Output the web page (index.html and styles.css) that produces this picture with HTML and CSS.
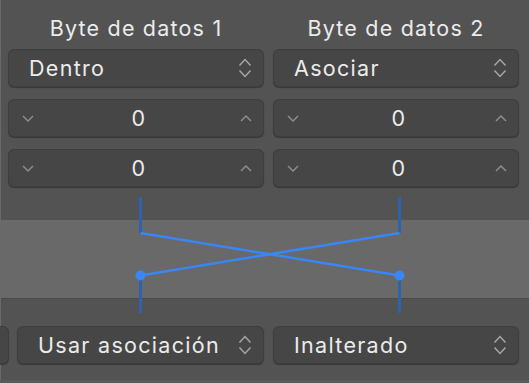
FILE: index.html
```html
<!DOCTYPE html>
<html>
<head>
<meta charset="utf-8">
<link rel="stylesheet" href="styles.css">
</head>
<body>
<div class="frame">
  <div class="columns">
    <div class="col">
      <div class="head">Byte de datos 1</div>
      <div class="ctl popup"><span>Dentro</span>
        <svg class="updown" width="14" height="22" viewBox="0 0 14 22"><path d="M1.5 8.5 L7 2.5 L12.5 8.5 M1.5 13.5 L7 19.5 L12.5 13.5" fill="none" stroke="#a6a6a6" stroke-width="1.5"/></svg>
      </div>
      <div class="ctl stepper">
        <svg class="dn" width="12" height="7" viewBox="0 0 12 7"><path d="M1 1 L6 6 L11 1" fill="none" stroke="#8c8c8c" stroke-width="1.5"/></svg>
        <span class="num">0</span>
        <svg class="up" width="12" height="7" viewBox="0 0 12 7"><path d="M1 6 L6 1 L11 6" fill="none" stroke="#8c8c8c" stroke-width="1.5"/></svg>
      </div>
      <div class="ctl stepper">
        <svg class="dn" width="12" height="7" viewBox="0 0 12 7"><path d="M1 1 L6 6 L11 1" fill="none" stroke="#8c8c8c" stroke-width="1.5"/></svg>
        <span class="num">0</span>
        <svg class="up" width="12" height="7" viewBox="0 0 12 7"><path d="M1 6 L6 1 L11 6" fill="none" stroke="#8c8c8c" stroke-width="1.5"/></svg>
      </div>
    </div>
    <div class="col">
      <div class="head">Byte de datos 2</div>
      <div class="ctl popup"><span>Asociar</span>
        <svg class="updown" width="14" height="22" viewBox="0 0 14 22"><path d="M1.5 8.5 L7 2.5 L12.5 8.5 M1.5 13.5 L7 19.5 L12.5 13.5" fill="none" stroke="#a6a6a6" stroke-width="1.5"/></svg>
      </div>
      <div class="ctl stepper">
        <svg class="dn" width="12" height="7" viewBox="0 0 12 7"><path d="M1 1 L6 6 L11 1" fill="none" stroke="#8c8c8c" stroke-width="1.5"/></svg>
        <span class="num">0</span>
        <svg class="up" width="12" height="7" viewBox="0 0 12 7"><path d="M1 6 L6 1 L11 6" fill="none" stroke="#8c8c8c" stroke-width="1.5"/></svg>
      </div>
      <div class="ctl stepper">
        <svg class="dn" width="12" height="7" viewBox="0 0 12 7"><path d="M1 1 L6 6 L11 1" fill="none" stroke="#8c8c8c" stroke-width="1.5"/></svg>
        <span class="num">0</span>
        <svg class="up" width="12" height="7" viewBox="0 0 12 7"><path d="M1 6 L6 1 L11 6" fill="none" stroke="#8c8c8c" stroke-width="1.5"/></svg>
      </div>
    </div>
  </div>

  <div class="diagram">
    <div class="band"></div>
    <svg class="wires" width="529" height="139" viewBox="0 0 529 139">
      <g stroke="#2d62b0" stroke-width="3" fill="none">
        <line x1="140.5" y1="10" x2="140.5" y2="46"/>
        <line x1="399.5" y1="10" x2="399.5" y2="46"/>
        <line x1="140.5" y1="89" x2="140.5" y2="126"/>
        <line x1="399.5" y1="89" x2="399.5" y2="126"/>
      </g>
      <g stroke="#3a86f5" stroke-width="2.5" fill="none">
        <line x1="140.5" y1="46" x2="399.5" y2="88.5"/>
        <line x1="399.5" y1="46" x2="140.5" y2="88.5"/>
      </g>
      <circle cx="140.5" cy="88.5" r="5" fill="#3a86f5"/>
      <circle cx="399.5" cy="88.5" r="5" fill="#3a86f5"/>
    </svg>
  </div>

  <div class="bottom">
    <div class="ctl partial"></div>
    <div class="ctl popup wide"><span>Usar asociación</span>
      <svg class="updown" width="14" height="22" viewBox="0 0 14 22"><path d="M1.5 8.5 L7 2.5 L12.5 8.5 M1.5 13.5 L7 19.5 L12.5 13.5" fill="none" stroke="#a6a6a6" stroke-width="1.5"/></svg>
    </div>
    <div class="ctl popup last"><span>Inalterado</span>
      <svg class="updown" width="14" height="22" viewBox="0 0 14 22"><path d="M1.5 8.5 L7 2.5 L12.5 8.5 M1.5 13.5 L7 19.5 L12.5 13.5" fill="none" stroke="#a6a6a6" stroke-width="1.5"/></svg>
    </div>
  </div>
</div>
</body>
</html>
```

FILE: styles.css
```css
html, body {
  margin: 0;
  padding: 0;
  background: #5a5a5a;
}
body {
  width: 529px;
  height: 383px;
  overflow: hidden;
  font-family: Inter, "Noto Sans", sans-serif;
  color: #ebebeb;
}
.frame {
  width: 528px;
  height: 380px;
  border-left: 1px solid #6a6a6a;
  background: #535353;
}
.columns {
  display: flex;
  gap: 9px;
  padding-left: 7px;
}
.col {
  display: flex;
  flex-direction: column;
  gap: 12px;
  width: 256px;
}
.col + .col {
  width: 246px;
}
.head {
  box-sizing: border-box;
  height: 49px;
  margin-bottom: -12px;
  padding-top: 16px;
  font-size: 21.5px;
  line-height: 24px;
  text-align: center;
  letter-spacing: 1.2px;
}
.ctl {
  box-sizing: border-box;
  height: 38px;
  background: #464646;
  border: 1px solid #3e3e3e;
  border-radius: 6px;
  box-shadow: 0 1px 1px rgba(0, 0, 0, 0.35);
  display: flex;
  align-items: center;
  font-size: 21.5px;
  letter-spacing: 1.3px;
}
.popup {
  padding-left: 20px;
  padding-right: 11px;
  justify-content: space-between;
}
.popup span {
  line-height: 24px;
}
.stepper {
  padding: 0 11px 0 13px;
  justify-content: space-between;
}
.stepper .num {
  line-height: 24px;
  margin-left: 4px;
}
.diagram {
  position: relative;
  height: 139px;
}
.band {
  position: absolute;
  left: 0;
  right: 0;
  top: 33px;
  height: 78px;
  background: #696969;
  border-bottom: 1px solid #4a4a4a;
}
.wires {
  position: absolute;
  left: -1px;
  top: 0;
}
.bottom {
  display: flex;
  gap: 8px;
}
.partial {
  width: 30px;
  margin-left: -22px;
}
.wide {
  width: 247px;
}
.last {
  width: 246px;
  margin-left: 1px;
}
```
